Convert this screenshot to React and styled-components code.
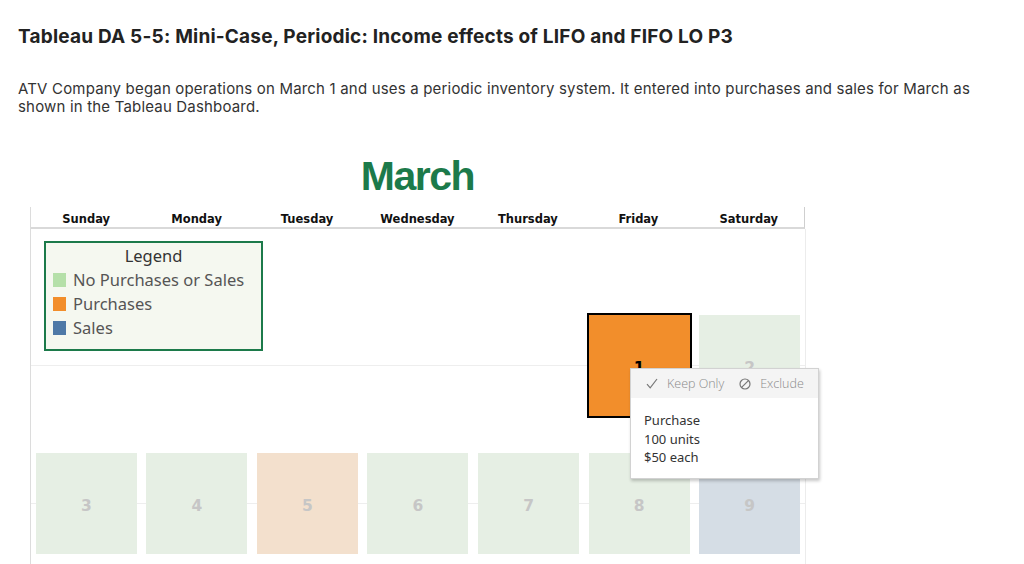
import React from "react";
import styled, { createGlobalStyle } from "styled-components";

const GlobalStyle = createGlobalStyle`
  html, body { margin: 0; padding: 0; background: #fff; overflow: hidden; }
  * { box-sizing: border-box; }
`;

const Page = styled.div`
  padding: 26px 18px 0 18px;
  font-family: "Inter", "Liberation Sans", sans-serif;
  color: #222;
`;

const Title = styled.h1`
  margin: 0;
  font-size: 19px;
  line-height: 22px;
  letter-spacing: 0.2px;
  font-weight: 700;
  color: #222;
`;

const Intro = styled.p`
  margin: 32px 0 0 0;
  width: 978px;
  font-size: 15px;
  line-height: 18px;
  letter-spacing: 0.18px;
  color: #333;
`;

const Dashboard = styled.section`
  margin: 37px 0 0 12px;
  width: 775px;
`;

const Month = styled.div`
  height: 47px;
  margin-bottom: 7px;
  text-align: center;
  font-family: "Liberation Sans", Arial, sans-serif;
  font-weight: 700;
  font-size: 41px;
  line-height: 47px;
  letter-spacing: -1.5px;
  color: #1c7a4a;
`;

const Frame = styled.div`
  position: relative;
  border-left: 1px solid #dcdcdc;
  width: 775px;
`;

const Header = styled.div`
  display: grid;
  grid-template-columns: repeat(7, 1fr);
  height: 22px;
  border-bottom: 2px solid #d9d9d9;
  border-right: 1px solid #cfcfcf;
  width: 774px;
`;

const DayName = styled.div`
  padding-top: 1px;
  text-align: center;
  font-family: "DejaVu Sans", Verdana, sans-serif;
  font-weight: 700;
  font-size: 11.5px;
  line-height: 22px;
  color: #111;
`;

const Body = styled.div`
  padding-top: 67px;
  border-right: 1px solid #ececec;
  width: 775px;
`;

const Week = styled.div`
  position: relative;
  display: grid;
  grid-template-columns: repeat(7, 1fr);
  align-items: center;
  height: 138px;
  width: 774px;
  &::before {
    content: "";
    position: absolute;
    left: 0;
    right: 0;
    top: 50%;
    height: 1px;
    background: #eeeeee;
  }
`;

const cellColors = {
  none: "#e6efe4",
  purchase: "#f3e0cd",
  sale: "#d5dde5",
};

const Cell = styled.div`
  position: relative;
  justify-self: center;
  width: 101px;
  height: 101px;
  display: flex;
  align-items: center;
  justify-content: center;
  padding-top: 5px;
  background: ${(p) => (p.$selected ? "#f28e2b" : cellColors[p.$type])};
  outline: ${(p) => (p.$selected ? "2px solid #000" : "none")};
  font-family: "DejaVu Sans", Verdana, sans-serif;
  font-weight: 700;
  font-size: 15.5px;
  color: ${(p) => (p.$selected ? "#000" : "#c6c6c6")};
`;

const Empty = styled.div``;

const Legend = styled.div`
  position: absolute;
  left: 13px;
  top: 34px;
  width: 219px;
  height: 110px;
  border: 2px solid #1c7a4a;
  background: #f5f8f0;
  padding: 1px 7px 0 7px;
  font-family: "Noto Sans", "Open Sans", sans-serif;
  font-size: 16.5px;
  line-height: 24px;
`;

const LegendTitle = styled.div`
  text-align: center;
  color: #333;
`;

const LegendItem = styled.div`
  display: flex;
  align-items: center;
  gap: 7px;
  color: #555;
`;

const Swatch = styled.span`
  width: 13px;
  height: 14px;
  background: ${(p) => p.$color};
  flex: none;
`;

const Tooltip = styled.div`
  position: absolute;
  left: 599px;
  top: 161px;
  width: 189px;
  height: 111px;
  background: #fff;
  border: 1px solid #d2d2d2;
  box-shadow: 1px 2px 3px rgba(0, 0, 0, 0.22);
  font-family: "Noto Sans", "Open Sans", sans-serif;
  z-index: 5;
`;

const ActionBar = styled.div`
  display: flex;
  align-items: center;
  height: 29px;
  background: #f4f4f4;
  padding-left: 15px;
  gap: 15px;
`;

const Action = styled.span`
  display: flex;
  align-items: center;
  gap: 9px;
  font-family: "Open Sans", "Noto Sans", sans-serif;
  font-weight: 300;
  font-size: 12.5px;
  color: #8a8a8a;
`;

const TipBody = styled.div`
  padding: 13px 14px 0 13px;
  font-size: 13px;
  line-height: 18.5px;
  color: #333;
`;

const CheckIcon = () => (
  <svg width="12" height="11" viewBox="0 0 12 11" fill="none">
    <path d="M1 6.2 L4.2 9.8 L11 1" stroke="#777" strokeWidth="1.2" />
  </svg>
);

const ExcludeIcon = () => (
  <svg width="12" height="12" viewBox="0 0 12 12" fill="none">
    <circle cx="6" cy="6" r="5" stroke="#777" strokeWidth="1.2" />
    <path d="M2.6 9.4 L9.4 2.6" stroke="#777" strokeWidth="1.2" />
  </svg>
);

const days = ["Sunday", "Monday", "Tuesday", "Wednesday", "Thursday", "Friday", "Saturday"];

const weeks = [
  [null, null, null, null, null, { n: 1, type: "purchase", selected: true }, { n: 2, type: "none" }],
  [
    { n: 3, type: "none" },
    { n: 4, type: "none" },
    { n: 5, type: "purchase" },
    { n: 6, type: "none" },
    { n: 7, type: "none" },
    { n: 8, type: "none" },
    { n: 9, type: "sale" },
  ],
];

export default function App() {
  return (
    <>
      <GlobalStyle />
      <Page>
        <Title>Tableau DA 5-5: Mini-Case, Periodic: Income effects of LIFO and FIFO LO P3</Title>
        <Intro>
          ATV Company began operations on March 1 and uses a periodic inventory system. It entered into
          purchases and sales for March as shown in the Tableau Dashboard.
        </Intro>
        <Dashboard>
          <Month>March</Month>
          <Frame>
            <Header>
              {days.map((d) => (
                <DayName key={d}>{d}</DayName>
              ))}
            </Header>
            <Body>
              {weeks.map((w, i) => (
                <Week key={i}>
                  {w.map((c, j) =>
                    c ? (
                      <Cell key={j} $type={c.type} $selected={c.selected}>
                        {c.n}
                      </Cell>
                    ) : (
                      <Empty key={j} />
                    )
                  )}
                </Week>
              ))}
            </Body>
            <Legend>
              <LegendTitle>Legend</LegendTitle>
              <LegendItem>
                <Swatch $color="#b5e0a9" />
                No Purchases or Sales
              </LegendItem>
              <LegendItem>
                <Swatch $color="#f28e2b" />
                Purchases
              </LegendItem>
              <LegendItem>
                <Swatch $color="#4e79a7" />
                Sales
              </LegendItem>
            </Legend>
            <Tooltip>
              <ActionBar>
                <Action>
                  <CheckIcon />
                  Keep Only
                </Action>
                <Action>
                  <ExcludeIcon />
                  Exclude
                </Action>
              </ActionBar>
              <TipBody>
                Purchase
                <br />
                100 units
                <br />
                $50 each
              </TipBody>
            </Tooltip>
          </Frame>
        </Dashboard>
      </Page>
    </>
  );
}
